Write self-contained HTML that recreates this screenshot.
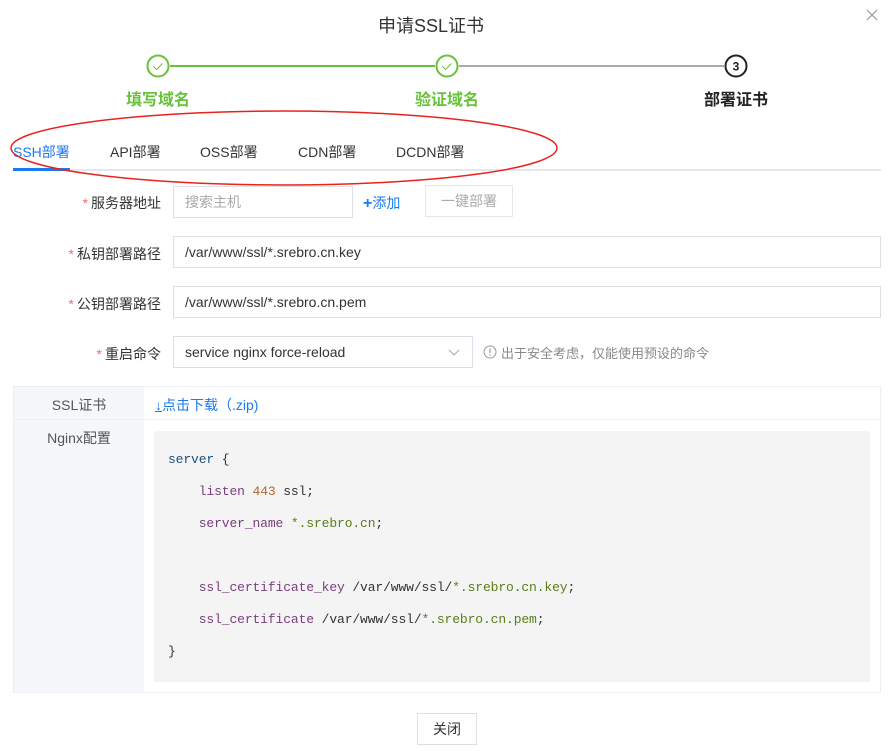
<!DOCTYPE html>
<html><head><meta charset="utf-8"><style>
*{margin:0;padding:0;box-sizing:border-box}
body{width:889px;height:751px;background:#fff;position:relative;overflow:hidden;font-family:"Liberation Sans","Noto Sans CJK SC",sans-serif;color:#333;font-size:14px}
.a{position:absolute}
.inp{position:absolute;border:1px solid #dcdfe6;background:#fff;padding-left:11px;line-height:30px;font-size:14px;color:#333}
.lbl{position:absolute;right:728px;font-size:14px;color:#333;white-space:nowrap}
.lbl b{color:#f56c6c;font-weight:normal;margin-right:3px}
.code{font-family:"Liberation Mono",monospace;font-size:13px;letter-spacing:-0.12px;white-space:pre;line-height:32px}
.k{color:#7a3e7d}.n{color:#b9652a}.s{color:#5a7d1a}.b{color:#1c4f7a}
</style></head><body>
<div class="a" style="left:0;width:862px;top:12px;text-align:center;font-size:18px;color:#333">申请SSL证书</div>
<svg class="a" style="left:865px;top:8px" width="14" height="14"><path d="M2 2L12 12M12 2L2 12" stroke="#999" stroke-width="1.2"/></svg>

<svg class="a" style="left:0;top:50px" width="889" height="34">
<line x1="170" y1="16" x2="435" y2="16" stroke="#67c23a" stroke-width="2"/>
<line x1="459" y1="16" x2="724" y2="16" stroke="#aaa" stroke-width="2"/>
<circle cx="158" cy="16" r="10.5" fill="#fff" stroke="#67c23a" stroke-width="2"/>
<path d="M153 16l3.5 3.5 6-6" fill="none" stroke="#67c23a" stroke-width="1"/>
<circle cx="447" cy="16" r="10.5" fill="#fff" stroke="#67c23a" stroke-width="2"/>
<path d="M442 16l3.5 3.5 6-6" fill="none" stroke="#67c23a" stroke-width="1"/>
<circle cx="736" cy="16" r="10.5" fill="#fff" stroke="#222" stroke-width="2"/>
<text x="736" y="20.5" text-anchor="middle" font-size="12" font-weight="bold" font-family="Liberation Sans" fill="#222">3</text>
</svg>
<div class="a" style="left:108px;width:100px;top:86px;text-align:center;font-size:16px;color:#67c23a;font-weight:bold">填写域名</div>
<div class="a" style="left:397px;width:100px;top:86px;text-align:center;font-size:16px;color:#67c23a;font-weight:bold">验证域名</div>
<div class="a" style="left:686px;width:100px;top:86px;text-align:center;font-size:16px;color:#222;font-weight:bold">部署证书</div>

<div class="a" style="left:13px;top:142px;font-size:14px;color:#1a7af0">SSH部署</div>
<div class="a" style="left:110px;top:142px;font-size:14px">API部署</div>
<div class="a" style="left:200px;top:142px;font-size:14px">OSS部署</div>
<div class="a" style="left:298px;top:142px;font-size:14px">CDN部署</div>
<div class="a" style="left:396px;top:142px;font-size:14px">DCDN部署</div>
<div class="a" style="left:13px;top:169px;width:868px;height:2px;background:#e4e7ed"></div>
<div class="a" style="left:13px;top:168px;width:57px;height:3px;background:#1a7af0"></div>
<svg class="a" style="left:0;top:105px" width="570" height="90"><ellipse cx="284" cy="43" rx="273" ry="37" fill="none" stroke="#e8231e" stroke-width="1.5"/></svg>

<div class="lbl" style="top:193px"><b>*</b>服务器地址</div>
<div class="inp" style="left:173px;top:186px;width:180px;height:32px;color:#aaa">搜索主机</div>
<div class="a" style="left:363px;top:193px;color:#1a7af0"><b style="font-size:16px;line-height:14px">+</b>添加</div>
<div class="a" style="left:425px;top:185px;width:88px;height:32px;border:1px solid #e4e7ed;text-align:center;line-height:30px;color:#aaa">一键部署</div>

<div class="lbl" style="top:244px"><b>*</b>私钥部署路径</div>
<div class="inp" style="left:173px;top:236px;width:708px;height:32px">/var/www/ssl/*.srebro.cn.key</div>
<div class="lbl" style="top:294px"><b>*</b>公钥部署路径</div>
<div class="inp" style="left:173px;top:286px;width:708px;height:32px">/var/www/ssl/*.srebro.cn.pem</div>
<div class="lbl" style="top:344px"><b>*</b>重启命令</div>
<div class="inp" style="left:173px;top:336px;width:300px;height:32px">service nginx force-reload</div>
<svg class="a" style="left:448px;top:347px" width="12" height="10"><path d="M1 3l5 5 5-5" fill="none" stroke="#aaa" stroke-width="1"/></svg>
<svg class="a" style="left:483px;top:345px" width="14" height="14"><circle cx="7" cy="7" r="6" fill="none" stroke="#999"/><path d="M7 3.5v4.5M7 9.5v1.2" stroke="#999" stroke-width="1.2"/></svg>
<div class="a" style="left:501px;top:343px;font-size:13px;color:#888">出于安全考虑，仅能使用预设的命令</div>

<div class="a" style="left:13px;top:386px;width:868px;height:307px;border:1px solid #ebeef5"></div>
<div class="a" style="left:14px;top:387px;width:130px;height:305px;background:#f5f7fa"></div>
<div class="a" style="left:14px;top:419px;width:866px;height:1px;background:#ebeef5"></div>
<div class="a" style="left:14px;top:395px;width:130px;text-align:center;font-size:14px;color:#555">SSL证书</div>
<div class="a" style="left:14px;top:428px;width:130px;text-align:center;font-size:14px;color:#555">Nginx配置</div>
<div class="a" style="left:155px;top:395px;font-size:14px;color:#1a7af0"><span style="text-decoration:underline">↓</span>点击下载（.zip)</div>
<div class="a" style="left:154px;top:431px;width:716px;height:251px;background:#f4f4f4"></div>
<div class="a code" style="left:168px;top:444px"><span class="b">server</span> {
    <span class="k">listen</span> <span class="n">443</span> ssl;
    <span class="k">server_name</span> <span class="s">*.srebro.cn</span>;

    <span class="k">ssl_certificate_key</span> /var/www/ssl/<span class="s">*.srebro.cn.key</span>;
    <span class="k">ssl_certificate</span> /var/www/ssl/<span class="s">*.srebro.cn.pem</span>;
}</div>

<div class="a" style="left:417px;top:713px;width:60px;height:32px;border:1px solid #dcdfe6;text-align:center;line-height:30px;font-size:14px;color:#333">关闭</div>
</body></html>
